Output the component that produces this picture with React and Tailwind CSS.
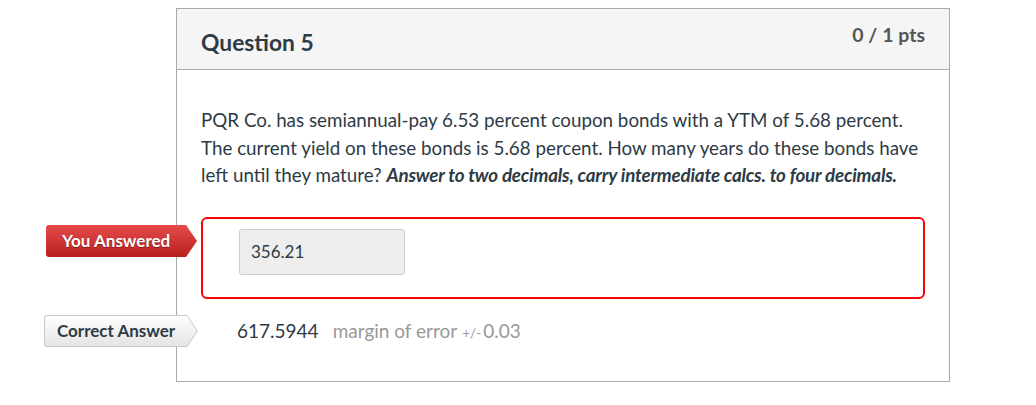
import React from "react";

function Tag({ variant, children }) {
  const red = variant === "red";
  return (
    <div className="flex items-stretch">
      <div
        className={`flex items-center h-[32px] rounded-l-[3px] text-[17px] font-bold whitespace-nowrap ${
          red
            ? "w-[140px] pl-[16px] bg-gradient-to-b from-[#e64a4a] to-[#b81f1f] text-white [text-shadow:0_1px_1px_rgba(0,0,0,0.35)]"
            : "w-[143px] pl-[12px] bg-gradient-to-b from-white to-[#e4e4e4] text-[#2d3b45] border border-r-0 border-[#c8c8c8]"
        }`}
      >
        {children}
      </div>
      <svg width="11" height="32" viewBox="0 0 11 32" className="block">
        <defs>
          <linearGradient id={`g-${variant}`} x1="0" y1="0" x2="0" y2="1">
            <stop offset="0" stopColor={red ? "#e64a4a" : "#ffffff"} />
            <stop offset="1" stopColor={red ? "#b81f1f" : "#e4e4e4"} />
          </linearGradient>
        </defs>
        <polygon points="0,0 11,16 0,32" fill={`url(#g-${variant})`} />
        {!red && <polyline points="0,0.5 10.4,16 0,31.5" fill="none" stroke="#c8c8c8" strokeWidth="1" />}
      </svg>
    </div>
  );
}

export default function App() {
  return (
    <div className="bg-white min-h-screen pt-[8px] font-['Lato',sans-serif]">
      <div className="ml-[176px] w-[774px] border border-[#aaaaaa] bg-white">
        {/* HEADER */}
        <div className="flex justify-between bg-[#f5f5f5] border-b border-[#aaaaaa] h-[61px] px-[24px]">
          <h2 className="text-[22.8px] font-bold text-[#2d3b45] pt-[18px] leading-[30px]">Question 5</h2>
          <div className="text-[19.5px] font-bold text-[#555] pt-[13px] leading-[26px]">0 / 1 pts</div>
        </div>

        {/* BODY */}
        <div className="px-[24px] pt-[36px] pb-[33px]">
          <p className="text-[18.8px] leading-[27.5px] text-[#2d3b45]">
            PQR Co. has semiannual-pay 6.53 percent coupon bonds with a YTM of 5.68 percent. The current yield on
            these bonds is 5.68 percent. How many years do these bonds have left until they mature?{" "}
            <strong className="italic tracking-[-0.2px]">Answer to two decimals, carry intermediate calcs. to four decimals.</strong>
          </p>

          {/* YOU ANSWERED */}
          <div className="relative mt-[28px]">
            <div className="absolute left-[-155px] top-[8px]">
              <Tag variant="red">You Answered</Tag>
            </div>
            <div className="border-2 border-[#ff0000] rounded-[6px] h-[82px] pl-[36px] pt-[10px]">
              <div className="w-[166px] h-[46px] bg-[#eeeeee] border border-[#cccccc] rounded-[3px] flex items-center px-[11px] text-[17px] text-[#2d3b45]">
                356.21
              </div>
            </div>
          </div>

          {/* CORRECT ANSWER */}
          <div className="relative mt-[16px] h-[33px]">
            <div className="absolute left-[-157px] top-0">
              <Tag variant="gray">Correct Answer</Tag>
            </div>
            <div className="flex items-baseline pl-[36px] pt-[3px] leading-[26px] whitespace-nowrap">
              <span className="text-[19px] text-[#2d3b45]">617.5944</span>
              <span className="ml-[14px] text-[19px] text-[#999]">margin of error</span>
              <span className="ml-[5px] text-[13.5px] text-[#999]">+/-</span>
              <span className="ml-[2px] text-[19px] text-[#999]">0.03</span>
            </div>
          </div>
        </div>
      </div>
    </div>
  );
}
